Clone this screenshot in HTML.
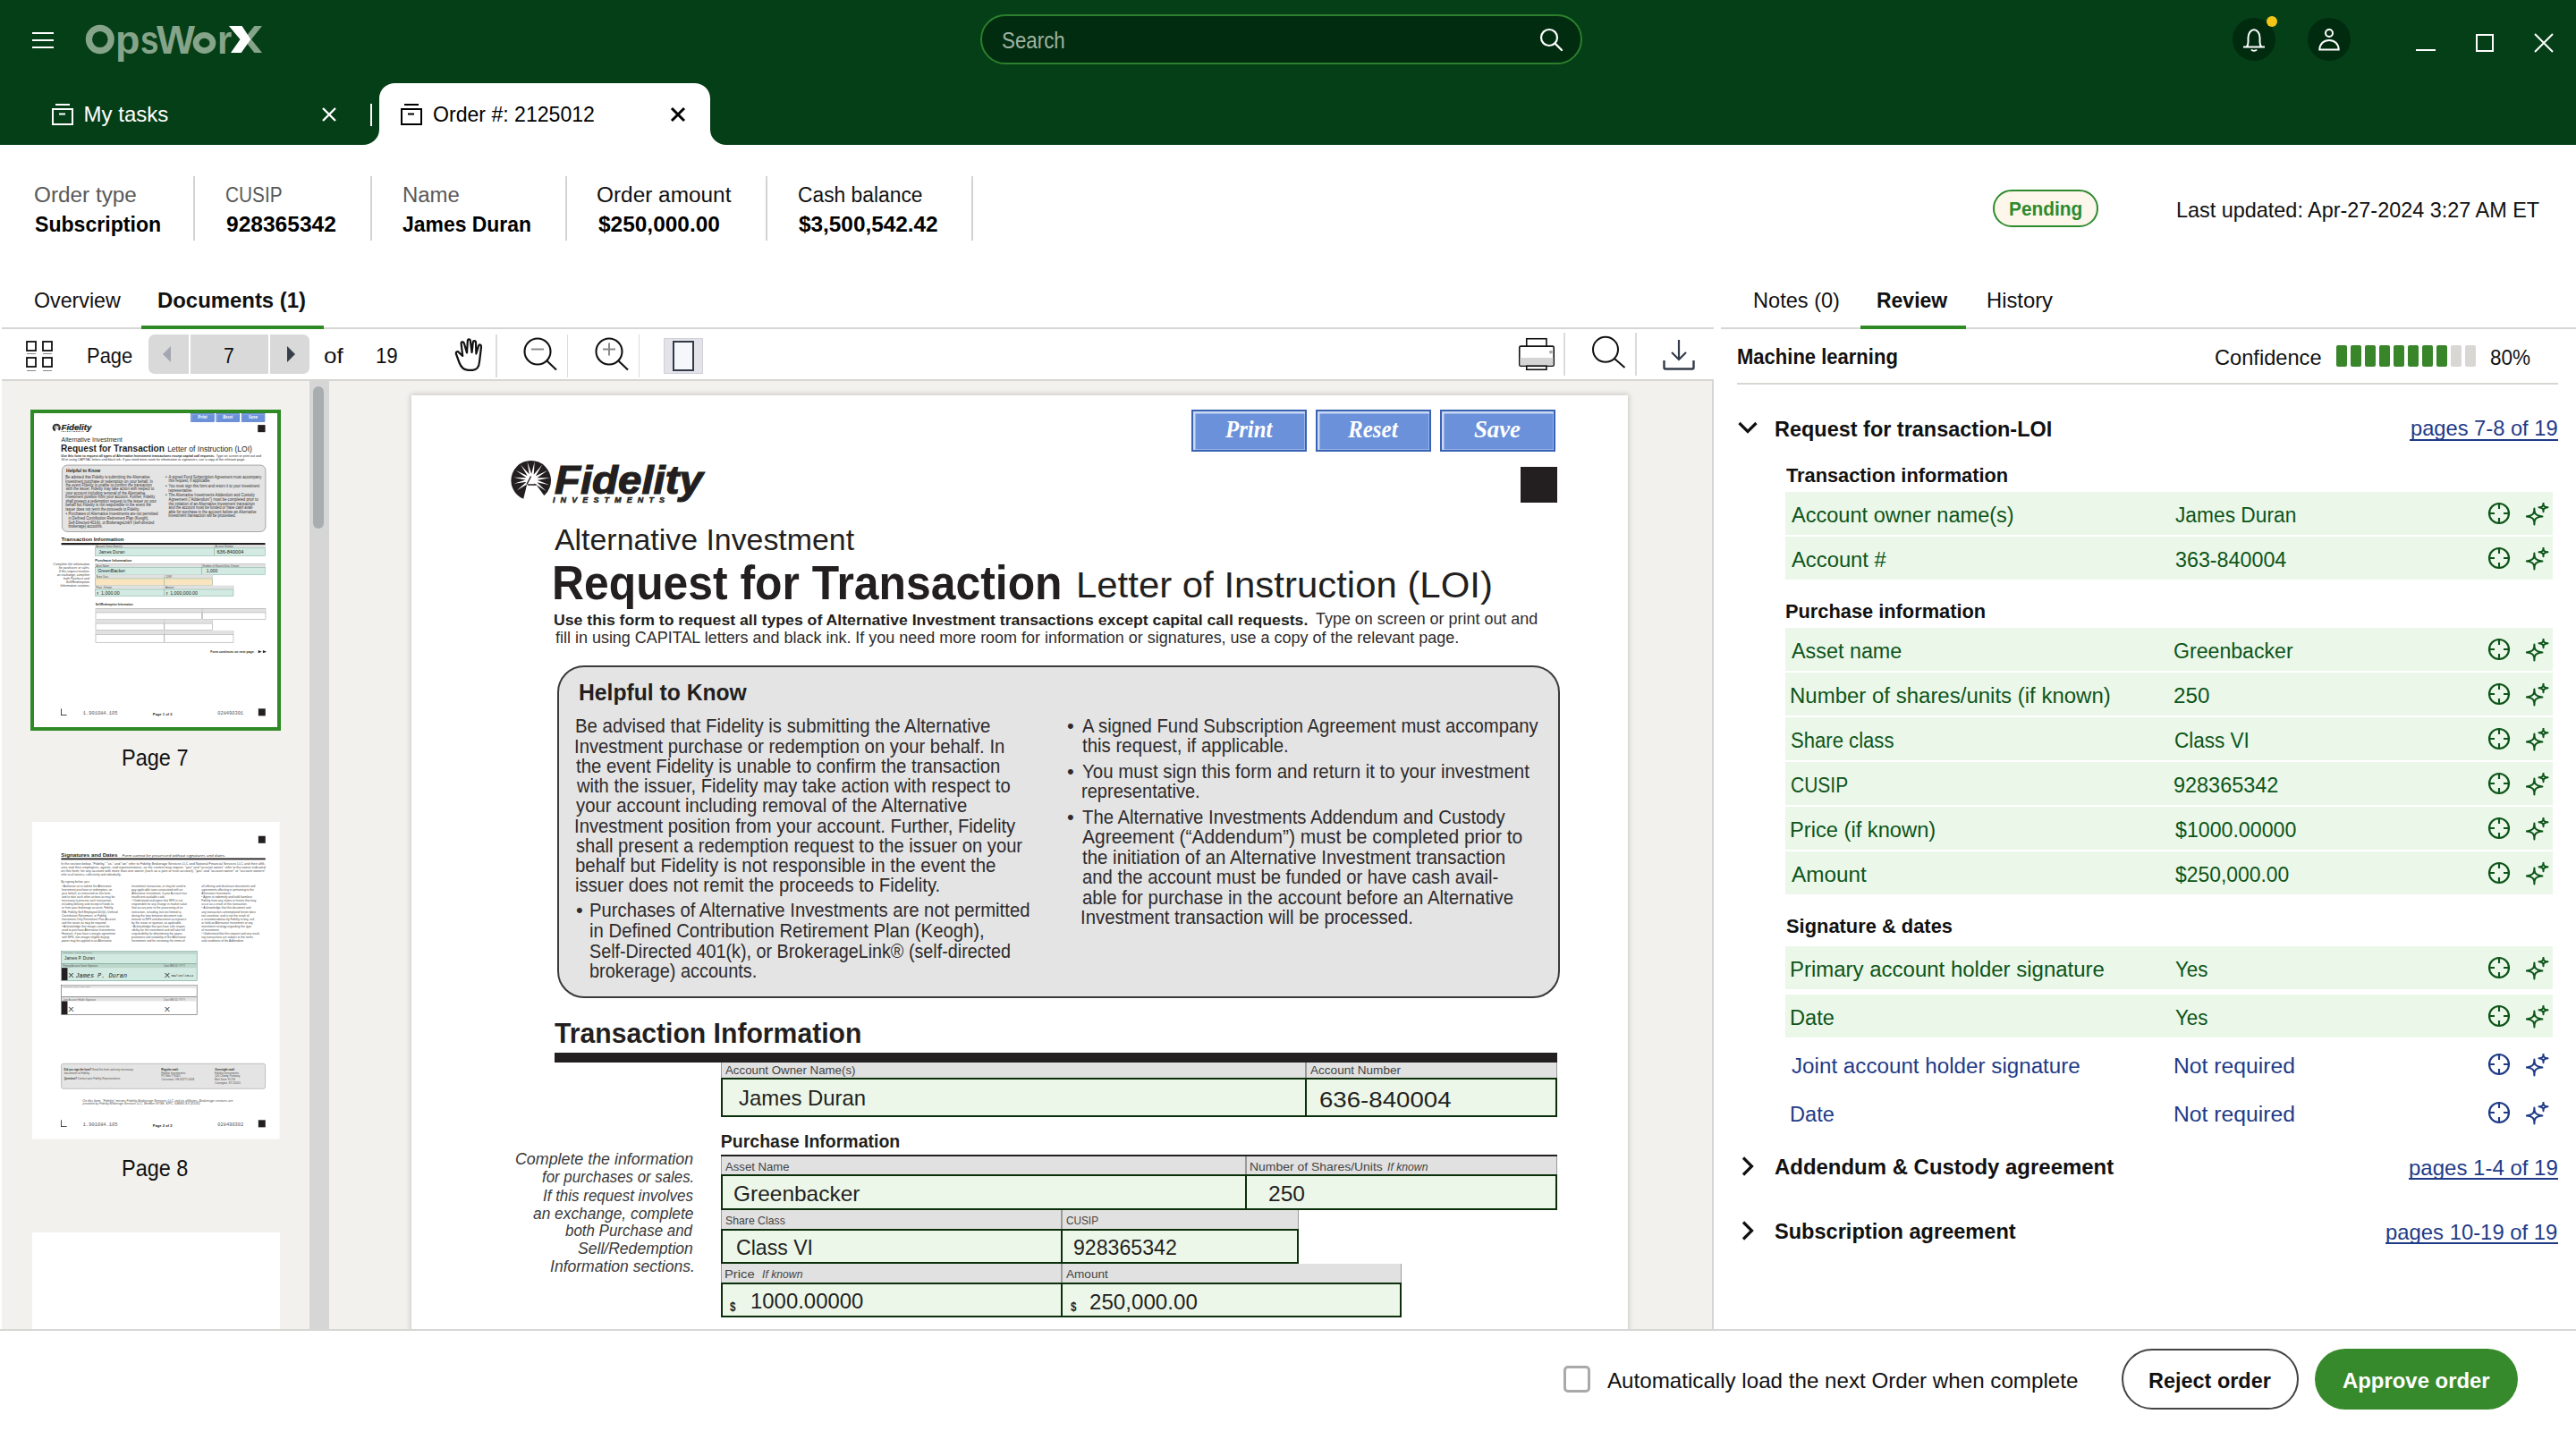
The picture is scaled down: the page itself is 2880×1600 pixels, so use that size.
<!DOCTYPE html><html><head><meta charset="utf-8"><style>*{margin:0;padding:0}
html,body{width:2880px;height:1600px;overflow:hidden;background:#fff}
body{position:relative;font-family:"Liberation Sans",sans-serif}
.t{position:absolute;white-space:nowrap;line-height:1;transform-origin:0 0}
.b{position:absolute;display:block}
</style></head><body><div class="b" style="left:0px;top:0px;width:2880px;height:162px;background:#053f17"></div><div class="b" style="left:36px;top:36px;width:24px;height:2px;background:#fff"></div><div class="b" style="left:36px;top:44px;width:24px;height:2px;background:#fff"></div><div class="b" style="left:36px;top:52px;width:24px;height:2px;background:#fff"></div><svg class="b" style="left:90px;top:22px;overflow:visible" width="60" height="50" viewBox="0 0 60 50" fill="none"><ellipse cx="21.8" cy="22" rx="12.4" ry="12.6" stroke="#86a48a" stroke-width="7.2"/><ellipse cx="138.5" cy="26" rx="9.4" ry="8.6" stroke="#86a48a" stroke-width="6.8"/></svg><div class="t" style="left:129.00px;top:21.50px;font-size:45px;color:#86a48a;font-weight:bold;">p</div><div class="t" style="left:156.78px;top:21.50px;font-size:45px;color:#86a48a;font-weight:bold;transform:scaleX(0.8174);">s</div><div class="t" style="left:174.80px;top:21.50px;font-size:45px;color:#86a48a;font-weight:bold;transform:scaleX(1.0140);">W</div><div class="t" style="left:242.95px;top:21.50px;font-size:45px;color:#86a48a;font-weight:bold;transform:scaleX(0.9267);">r</div><svg class="b" style="left:250px;top:25px;" width="50" height="40" viewBox="0 0 50 40" fill="none"><path d="M34.4 4H43L31 19L43 34H34.4L22.5 19Z" fill="#86a48a"/><path d="M5.9 4H20.5L30.3 19L19.7 34H8L18.5 19Z" fill="#fff"/></svg><div class="b" style="left:1096px;top:16px;width:673px;height:55px;background:#012c0f;border:2px solid #2c7f2c;border-radius:28px;height:56px;box-sizing:border-box"></div><div class="t" style="left:1119.61px;top:32.53px;font-size:25px;color:#9fb3a2;transform:scaleX(0.8925);">Search</div><svg class="b" style="left:1720px;top:30px;" width="30" height="30" viewBox="0 0 30 30" fill="none"><circle cx="12" cy="12" r="9" stroke="#fff" stroke-width="2.2"/><path d="M18.5 18.5L26 26" stroke="#fff" stroke-width="2.4" stroke-linecap="round"/></svg><div class="b" style="left:2496px;top:20px;width:48px;height:48px;background:#002b0f;border-radius:50%"></div><div class="b" style="left:2534px;top:18px;width:12px;height:12px;background:#f5c518;border-radius:50%"></div><svg class="b" style="left:2506px;top:30px;" width="28" height="30" viewBox="0 0 28 30" fill="none"><path d="M2 22.5H26M5.5 22.5C7 21 7.5 19 7.5 17V12C7.5 7 10.5 3.3 14 3.3C17.5 3.3 20.5 7 20.5 12V17C20.5 19 21 21 22.5 22.5" stroke="#fff" stroke-width="2"/><path d="M11 25.5C12 27.2 16 27.2 17 25.5" stroke="#fff" stroke-width="1.8"/></svg><div class="b" style="left:2580px;top:20px;width:48px;height:48px;background:#002b0f;border-radius:50%"></div><svg class="b" style="left:2590px;top:30px;" width="28" height="28" viewBox="0 0 28 28" fill="none"><circle cx="14" cy="7" r="4" stroke="#fff" stroke-width="2"/><path d="M3.3 25.5C3.5 19 8 15 14 15C20 15 24.5 19 24.7 25.5Z" stroke="#fff" stroke-width="2"/></svg><div class="b" style="left:2701px;top:55px;width:22px;height:2px;background:#fff"></div><div class="b" style="left:2768px;top:38px;width:20px;height:20px;border:2px solid #fff;box-sizing:border-box"></div><svg class="b" style="left:2832px;top:36px;" width="24" height="24" viewBox="0 0 24 24" fill="none"><path d="M2 2L22 22M22 2L2 22" stroke="#fff" stroke-width="2"/></svg><svg class="b" style="left:58px;top:116px;" width="24" height="24" viewBox="0 0 24 24" fill="none"><path d="M4 1H20" stroke="#fff" stroke-width="2"/><rect x="1" y="6" width="22" height="17" stroke="#fff" stroke-width="2"/><path d="M8 11.5H15" stroke="#fff" stroke-width="2"/></svg><div class="t" style="left:93.60px;top:115.68px;font-size:24px;color:#fff;">My tasks</div><svg class="b" style="left:358px;top:118px;" width="20" height="20" viewBox="0 0 20 20" fill="none"><path d="M3 3L17 17M17 3L3 17" stroke="#fff" stroke-width="2.4"/></svg><div class="b" style="left:414px;top:116px;width:2px;height:25px;background:#fff"></div><svg class="b" style="left:406px;top:93px" width="406" height="69" viewBox="0 0 406 69"><path d="M0 69C9 69 18 62 18 52V17C18 7 26 0 36 0H370C380 0 388 7 388 17V52C388 62 397 69 406 69Z" fill="#fff"/></svg><svg class="b" style="left:448px;top:116px;" width="24" height="24" viewBox="0 0 24 24" fill="none"><path d="M4 1H20" stroke="#000" stroke-width="2"/><rect x="1" y="6" width="22" height="17" stroke="#000" stroke-width="2"/><path d="M8 11.5H15" stroke="#000" stroke-width="2"/></svg><div class="t" style="left:484.04px;top:115.68px;font-size:24px;color:#000;transform:scaleX(0.9615);">Order #: 2125012</div><svg class="b" style="left:748px;top:118px;" width="20" height="20" viewBox="0 0 20 20" fill="none"><path d="M3 3L17 17M17 3L3 17" stroke="#000" stroke-width="3"/></svg><div class="t" style="left:37.54px;top:207.13px;font-size:23px;color:#595959;transform:scaleX(1.0574);">Order type</div><div class="t" style="left:251.60px;top:207.13px;font-size:23px;color:#595959;transform:scaleX(0.9050);">CUSIP</div><div class="t" style="left:449.96px;top:207.13px;font-size:23px;color:#595959;transform:scaleX(1.0410);">Name</div><div class="t" style="left:666.94px;top:207.13px;font-size:23px;color:#111;transform:scaleX(1.0600);">Order amount</div><div class="t" style="left:891.51px;top:207.13px;font-size:23px;color:#111;transform:scaleX(0.9917);">Cash balance</div><div class="t" style="left:38.60px;top:238.68px;font-size:24px;color:#000;font-weight:bold;transform:scaleX(0.9623);">Subscription</div><div class="t" style="left:252.50px;top:238.68px;font-size:24px;color:#000;font-weight:bold;transform:scaleX(1.0227);">928365342</div><div class="t" style="left:450.30px;top:238.68px;font-size:24px;color:#000;font-weight:bold;transform:scaleX(0.9555);">James Duran</div><div class="t" style="left:668.90px;top:238.68px;font-size:24px;color:#000;font-weight:bold;transform:scaleX(1.0179);">$250,000.00</div><div class="t" style="left:892.50px;top:238.68px;font-size:24px;color:#000;font-weight:bold;transform:scaleX(1.0142);">$3,500,542.42</div><div class="b" style="left:215.5px;top:197px;width:2px;height:72px;background:#d3d3d3"></div><div class="b" style="left:413.8px;top:197px;width:2px;height:72px;background:#d3d3d3"></div><div class="b" style="left:631.6px;top:197px;width:2px;height:72px;background:#d3d3d3"></div><div class="b" style="left:856px;top:197px;width:2px;height:72px;background:#d3d3d3"></div><div class="b" style="left:1085.5px;top:197px;width:2px;height:72px;background:#d3d3d3"></div><div class="b" style="left:2228px;top:212px;width:118px;height:42px;background:#fdf6ea;border:2px solid #2e8a2e;border-radius:21px;box-sizing:border-box"></div><div class="t" style="left:2246.05px;top:222.87px;font-size:22px;color:#2e8a2e;font-weight:bold;transform:scaleX(0.9486);">Pending</div><div class="t" style="left:2432.62px;top:222.98px;font-size:24px;color:#111;transform:scaleX(0.9755);">Last updated: Apr-27-2024 3:27 AM ET</div><div class="t" style="left:37.53px;top:323.98px;font-size:24px;color:#111;transform:scaleX(0.9680);">Overview</div><div class="t" style="left:176.00px;top:323.98px;font-size:24px;color:#111;font-weight:bold;transform:scaleX(0.9958);">Documents (1)</div><div class="b" style="left:2px;top:366px;width:1914px;height:2px;background:#d6d6d2"></div><div class="b" style="left:158px;top:364px;width:204px;height:4px;background:#2f8a26"></div><div class="b" style="left:1924px;top:366px;width:956px;height:2px;background:#d6d6d2"></div><div class="t" style="left:1960.02px;top:323.98px;font-size:24px;color:#111;transform:scaleX(0.9824);">Notes (0)</div><div class="t" style="left:2098.04px;top:323.98px;font-size:24px;color:#111;font-weight:bold;transform:scaleX(0.9568);">Review</div><div class="t" style="left:2220.51px;top:323.98px;font-size:24px;color:#111;transform:scaleX(0.9909);">History</div><div class="b" style="left:2080px;top:364px;width:118px;height:4px;background:#2f8a26"></div><svg class="b" style="left:27px;top:379px;" width="34" height="38" viewBox="0 0 34 38" fill="none"><rect x="3" y="3" width="10" height="10" stroke="#111" stroke-width="1.8"/><rect x="21" y="3" width="10" height="10" stroke="#111" stroke-width="1.8"/><rect x="3" y="21" width="10" height="10" stroke="#111" stroke-width="1.8"/><rect x="21" y="21" width="10" height="10" stroke="#111" stroke-width="1.8"/><path d="M3 16.5H13M21 16.5H31M3 35.5H13M21 35.5H31" stroke="#888" stroke-width="1"/></svg><div class="t" style="left:97.09px;top:386.08px;font-size:24px;color:#111;transform:scaleX(0.9140);">Page</div><div class="b" style="left:166px;top:374px;width:180px;height:44px;background:#d9d9d9;border-radius:7px"></div><div class="b" style="left:211px;top:374px;width:2px;height:44px;background:#fff"></div><div class="b" style="left:300px;top:374px;width:2px;height:44px;background:#fff"></div><svg class="b" style="left:180px;top:386px;" width="14" height="20" viewBox="0 0 14 20" fill="none"><path d="M11 1V19L2 10Z" fill="#a3a7b0"/></svg><div class="t" style="left:250.12px;top:386.08px;font-size:24px;color:#111;transform:scaleX(0.8833);">7</div><svg class="b" style="left:319px;top:386px;" width="14" height="20" viewBox="0 0 14 20" fill="none"><path d="M2 1V19L11 10Z" fill="#393e4b"/></svg><div class="t" style="left:361.91px;top:386.08px;font-size:24px;color:#111;transform:scaleX(1.0854);">of</div><div class="t" style="left:420.07px;top:386.08px;font-size:24px;color:#111;transform:scaleX(0.9271);">19</div><svg class="b" style="left:500px;top:372px;" width="50" height="50" viewBox="0 0 50 50" fill="none"><path d="M17.2 26L13.2 22.2C12 20.6 9.4 20.8 9.9 23.6L13.5 33.5C15 37.5 18 41.5 23.5 41.8H28.5C33 41.5 35.6 38 36 32.5L38 16C38.3 13.3 35.8 12.6 35 14.8L32.4 23.5L32 11C31.9 8.4 28.9 8.4 28.8 11L27.6 22L25.9 9.3C25.6 6.8 22.6 6.8 22.8 9.5L22 22.5L18.9 12C18.2 9.6 15.3 10 15.7 12.6Z" stroke="#111" stroke-width="2.2" stroke-linejoin="round"/></svg><div class="b" style="left:554.05px;top:374px;width:1.5px;height:48px;background:#dcdcdc"></div><div class="b" style="left:633.85px;top:374px;width:1.5px;height:48px;background:#dcdcdc"></div><div class="b" style="left:713.85px;top:374px;width:1.5px;height:48px;background:#dcdcdc"></div><svg class="b" style="left:583px;top:375px;" width="44" height="44" viewBox="0 0 44 44" fill="none"><circle cx="18" cy="18" r="14.5" stroke="#111" stroke-width="2.1"/><path d="M28.5 28.5L39 38.5" stroke="#111" stroke-width="2.1"/><path d="M11 15.5H25" stroke="#8a8a8a" stroke-width="2"/></svg><svg class="b" style="left:663px;top:375px;" width="44" height="44" viewBox="0 0 44 44" fill="none"><circle cx="18" cy="18" r="14.5" stroke="#111" stroke-width="2.1"/><path d="M28.5 28.5L39 38.5" stroke="#111" stroke-width="2.1"/><path d="M11 15.5H25M18 8.5V22.5" stroke="#8a8a8a" stroke-width="2"/></svg><div class="b" style="left:742px;top:378px;width:44px;height:40px;background:#e3e3e9;border:1px solid #cfd0d8;box-sizing:border-box"></div><div class="b" style="left:752px;top:380.5px;width:24px;height:34.5px;background:#f5f7fb;border:2.6px solid #333a48;box-sizing:border-box"></div><svg class="b" style="left:1696px;top:376px;" width="44" height="40" viewBox="0 0 44 40" fill="none"><rect x="10.75" y="2.75" width="22.2" height="12" fill="#fff" stroke="#111" stroke-width="1.6"/><rect x="2.75" y="11.15" width="38.5" height="22.1" rx="1.5" fill="#fff" stroke="#111" stroke-width="1.6"/><rect x="3.6" y="24" width="36.8" height="8.4" fill="#d5d5d5"/><rect x="10.75" y="33.25" width="22.2" height="4" fill="#fff" stroke="#111" stroke-width="1.6"/><circle cx="37.9" cy="17.6" r="1.9" fill="#aaa"/></svg><div class="b" style="left:1748.2px;top:372px;width:1.6px;height:48px;background:#dcdcdc"></div><svg class="b" style="left:1776px;top:374px;" width="44" height="44" viewBox="0 0 44 44" fill="none"><circle cx="19" cy="16.8" r="14" stroke="#111" stroke-width="2"/><path d="M29 27L40.5 37" stroke="#111" stroke-width="2"/></svg><div class="b" style="left:1828px;top:372px;width:1.6px;height:48px;background:#dcdcdc"></div><svg class="b" style="left:1856px;top:378px;" width="42" height="38" viewBox="0 0 42 38" fill="none"><path d="M21 2V24M13 16L21 24L29 16" stroke="#333a48" stroke-width="2.2"/><path d="M4.5 25V33C4.5 34 5 34.5 6 34.5H36C37 34.5 37.5 34 37.5 33V25" stroke="#333a48" stroke-width="2.4"/></svg><div class="b" style="left:2px;top:424px;width:1914px;height:2px;background:#d6d6d2"></div><div class="b" style="left:2px;top:426px;width:1912px;height:1060px;background:#f2f1ed"></div><div class="b" style="left:1914px;top:426px;width:2px;height:1060px;background:#d6d6d4"></div><div class="b" style="left:0px;top:1486px;width:2880px;height:2px;background:#d6d6d4"></div><div class="b" style="left:346px;top:426px;width:22px;height:1060px;background:#d6d6d6"></div><div class="b" style="left:350px;top:432px;width:12px;height:159px;background:#a8adb0;border-radius:6px"></div><div class="b" style="left:0;top:426px;width:1914px;height:1060px;overflow:hidden"><div class="b" style="left:460px;top:16px;width:1360px;height:1760px;background:#fff;box-shadow:0 0 6px 1px rgba(0,0,0,0.18)"><div class="b" style="left:872px;top:16px;width:128.5px;height:46.5px;background:#6a91d9;border:2px solid #3a62b4;box-shadow:inset 1px 1px 0 1.5px #c9d8f5;box-sizing:border-box"></div><div class="t" style="left:909.87px;top:25.14px;font-size:27px;color:#fff;font-family:'Liberation Serif';font-weight:bold;font-style:italic;transform:scaleX(0.9174);">Print</div><div class="b" style="left:1011px;top:16px;width:128.5px;height:46.5px;background:#6a91d9;border:2px solid #3a62b4;box-shadow:inset 1px 1px 0 1.5px #c9d8f5;box-sizing:border-box"></div><div class="t" style="left:1047.18px;top:25.14px;font-size:27px;color:#fff;font-family:'Liberation Serif';font-weight:bold;font-style:italic;transform:scaleX(0.9282);">Reset</div><div class="b" style="left:1150px;top:16px;width:128.5px;height:46.5px;background:#6a91d9;border:2px solid #3a62b4;box-shadow:inset 1px 1px 0 1.5px #c9d8f5;box-sizing:border-box"></div><div class="t" style="left:1188.25px;top:25.14px;font-size:27px;color:#fff;font-family:'Liberation Serif';font-weight:bold;font-style:italic;transform:scaleX(0.9905);">Save</div><div class="b" style="left:1240px;top:80px;width:41px;height:40px;background:#231f20"></div><svg class="b" style="left:108px;top:68px;" width="54" height="52" viewBox="0 0 54 52" fill="none"><circle cx="25.7" cy="27.2" r="22.3" fill="#231f20"/><path d="M21.8 29L16.2 52H46L31.6 32Z" fill="#fff"/><path d="M26.99 21.96L21.54 6.31L24.08 22.68ZM28.61 22.48L29.71 5.95L25.64 22.01ZM25.29 22.10L14.16 9.83L22.89 23.91ZM30.02 23.78L38.26 9.41L27.57 22.06ZM23.79 22.90L8.75 15.95L22.29 25.50ZM30.71 25.50L44.25 15.95L29.21 22.90ZM22.71 24.22L6.15 23.70L22.35 27.20ZM30.63 27.31L46.91 24.24L30.34 24.32ZM22.27 25.64L6.53 30.81L22.94 28.56ZM29.89 28.80L46.10 32.19L30.76 25.94ZM22.38 27.34L9.92 38.25L24.15 29.76ZM28.66 29.88L42.43 39.10L30.55 27.55Z" fill="#fff"/><circle cx="26.5" cy="26.2" r="5.2" fill="#fff"/><path d="M25.6 22.5L21 31.5M22 32H31.6" stroke="#231f20" stroke-width="1.4"/></svg><div class="t" style="left:160.40px;top:73.05px;font-size:44px;color:#231f20;font-weight:bold;font-style:italic;transform:scaleX(1.0770);font-weight:900;-webkit-text-stroke:1.2px #231f20;">Fidelity</div><div class="t" style="left:158.00px;top:112.68px;font-size:9px;color:#231f20;font-weight:bold;font-style:italic;letter-spacing:6.1px;-webkit-text-stroke:0.5px #231f20;">INVESTMENTS</div><div class="t" style="left:160.00px;top:145.78px;font-size:32.5px;color:#231f20;transform:scaleX(1.0420);">Alternative Investment</div><div class="t" style="left:157.23px;top:181.58px;font-size:54px;color:#231f20;font-weight:bold;transform:scaleX(0.9230);">Request for Transaction</div><div class="t" style="left:742.57px;top:191.06px;font-size:41.5px;color:#231f20;transform:scaleX(1.0099);">Letter of Instruction (LOI)</div><div class="t" style="left:159.46px;top:242.71px;font-size:17px;color:#231f20;font-weight:bold;transform:scaleX(1.0388);">Use this form to request all types of Alternative Investment transactions except capital call requests.</div><div class="t" style="left:1011.00px;top:242.28px;font-size:17.5px;color:#2e2b2c;transform:scaleX(1.0248);">Type on screen or print out and</div><div class="t" style="left:160.50px;top:262.58px;font-size:17.5px;color:#2e2b2c;transform:scaleX(1.0262);">fill in using CAPITAL letters and black ink. If you need more room for information or signatures, use a copy of the relevant page.</div><div class="b" style="left:162.5px;top:301.5px;width:1121.1px;height:372.5px;background:#e4e4e4;border:2px solid #3a3a3a;border-radius:30px;box-sizing:border-box"></div><div class="t" style="left:187.03px;top:320.41px;font-size:25.5px;color:#231f20;font-weight:bold;transform:scaleX(0.9678);">Helpful to Know</div><div class="t" style="left:182.77px;top:359.37px;font-size:22px;color:#2e2b2c;transform:scaleX(0.9261);">Be advised that Fidelity is submitting the Alternative</div><div class="t" style="left:181.86px;top:381.62px;font-size:22px;color:#2e2b2c;transform:scaleX(0.9217);">Investment purchase or redemption on your behalf. In</div><div class="t" style="left:183.70px;top:403.87px;font-size:22px;color:#2e2b2c;transform:scaleX(0.9237);">the event Fidelity is unable to confirm the transaction</div><div class="t" style="left:184.62px;top:426.12px;font-size:22px;color:#2e2b2c;transform:scaleX(0.9153);">with the issuer, Fidelity may take action with respect to</div><div class="t" style="left:183.70px;top:448.37px;font-size:22px;color:#2e2b2c;transform:scaleX(0.9238);">your account including removal of the Alternative</div><div class="t" style="left:181.86px;top:470.62px;font-size:22px;color:#2e2b2c;transform:scaleX(0.9208);">Investment position from your account. Further, Fidelity</div><div class="t" style="left:183.70px;top:492.87px;font-size:22px;color:#2e2b2c;transform:scaleX(0.9171);">shall present a redemption request to the issuer on your</div><div class="t" style="left:182.77px;top:515.12px;font-size:22px;color:#2e2b2c;transform:scaleX(0.9292);">behalf but Fidelity is not responsible in the event the</div><div class="t" style="left:182.78px;top:537.37px;font-size:22px;color:#2e2b2c;transform:scaleX(0.9231);">issuer does not remit the proceeds to Fidelity.</div><div class="t" style="left:184.00px;top:565.37px;font-size:22px;color:#2e2b2c;">•</div><div class="t" style="left:199.08px;top:565.37px;font-size:22px;color:#2e2b2c;transform:scaleX(0.9215);">Purchases of Alternative Investments are not permitted</div><div class="t" style="left:199.08px;top:587.97px;font-size:22px;color:#2e2b2c;transform:scaleX(0.9239);">in Defined Contribution Retirement Plan (Keogh),</div><div class="t" style="left:199.10px;top:610.57px;font-size:22px;color:#2e2b2c;transform:scaleX(0.8974);">Self-Directed 401(k), or BrokerageLink® (self-directed</div><div class="t" style="left:199.09px;top:633.17px;font-size:22px;color:#2e2b2c;transform:scaleX(0.9064);">brokerage) accounts.</div><div class="t" style="left:733.00px;top:359.37px;font-size:22px;color:#2e2b2c;">•</div><div class="t" style="left:750.00px;top:359.37px;font-size:22px;color:#2e2b2c;transform:scaleX(0.9222);">A signed Fund Subscription Agreement must accompany</div><div class="t" style="left:750.00px;top:381.07px;font-size:22px;color:#2e2b2c;transform:scaleX(0.9294);">this request, if applicable.</div><div class="t" style="left:733.00px;top:409.87px;font-size:22px;color:#2e2b2c;">•</div><div class="t" style="left:750.00px;top:409.87px;font-size:22px;color:#2e2b2c;transform:scaleX(0.9305);">You must sign this form and return it to your investment</div><div class="t" style="left:749.09px;top:432.37px;font-size:22px;color:#2e2b2c;transform:scaleX(0.9114);">representative.</div><div class="t" style="left:733.00px;top:460.77px;font-size:22px;color:#2e2b2c;">•</div><div class="t" style="left:750.00px;top:460.77px;font-size:22px;color:#2e2b2c;transform:scaleX(0.9226);">The Alternative Investments Addendum and Custody</div><div class="t" style="left:750.00px;top:483.17px;font-size:22px;color:#2e2b2c;transform:scaleX(0.9539);">Agreement (“Addendum”) must be completed prior to</div><div class="t" style="left:750.00px;top:505.67px;font-size:22px;color:#2e2b2c;transform:scaleX(0.9298);">the initiation of an Alternative Investment transaction</div><div class="t" style="left:750.00px;top:528.17px;font-size:22px;color:#2e2b2c;transform:scaleX(0.9212);">and the account must be funded or have cash avail-</div><div class="t" style="left:750.00px;top:550.67px;font-size:22px;color:#2e2b2c;transform:scaleX(0.9253);">able for purchase in the account before an Alternative</div><div class="t" style="left:748.15px;top:573.17px;font-size:22px;color:#2e2b2c;transform:scaleX(0.9244);">Investment transaction will be processed.</div><div class="t" style="left:160.00px;top:698.35px;font-size:31px;color:#231f20;font-weight:bold;transform:scaleX(0.9726);">Transaction Information</div><div class="b" style="left:160px;top:735px;width:1121px;height:10.5px;background:#231f20"></div><div class="t" style="left:115.84px;top:845.24px;font-size:18.5px;color:#3a3a3a;font-style:italic;transform:scaleX(0.9635);">Complete the information</div><div class="t" style="left:146.40px;top:865.34px;font-size:18.5px;color:#3a3a3a;font-style:italic;transform:scaleX(0.9097);">for purchases or sales.</div><div class="t" style="left:147.00px;top:885.54px;font-size:18.5px;color:#3a3a3a;font-style:italic;transform:scaleX(0.9175);">If this request involves</div><div class="t" style="left:135.60px;top:905.64px;font-size:18.5px;color:#3a3a3a;font-style:italic;transform:scaleX(0.9377);">an exchange, complete</div><div class="t" style="left:172.10px;top:925.04px;font-size:18.5px;color:#3a3a3a;font-style:italic;transform:scaleX(0.9140);">both Purchase and</div><div class="t" style="left:186.10px;top:945.14px;font-size:18.5px;color:#3a3a3a;font-style:italic;transform:scaleX(0.9494);">Sell/Redemption</div><div class="t" style="left:154.80px;top:965.24px;font-size:18.5px;color:#3a3a3a;font-style:italic;transform:scaleX(0.9487);">Information sections.</div><div class="b" style="left:346px;top:745.5px;width:653.5px;height:18.5px;background:#e1e1e1;border-left:1.5px solid #9a9a9a;border-right:1.5px solid #9a9a9a;box-sizing:border-box"></div><div class="t" style="left:351.00px;top:748.07px;font-size:13.5px;color:#444;transform:scaleX(0.9844);">Account Owner Name(s)</div><div class="b" style="left:999.5px;top:745.5px;width:281.2px;height:18.5px;background:#e1e1e1;border-left:1.5px solid #9a9a9a;border-right:1.5px solid #9a9a9a;box-sizing:border-box"></div><div class="t" style="left:1004.50px;top:748.07px;font-size:13.5px;color:#444;transform:scaleX(1.0045);">Account Number</div><div class="b" style="left:346px;top:763px;width:655px;height:44.4px;background:#ecf7ea;border:2.5px solid #0a2f0a;box-sizing:border-box"></div><div class="b" style="left:998.5px;top:763px;width:282.2px;height:44.4px;background:#ecf7ea;border:2.5px solid #0a2f0a;box-sizing:border-box"></div><div class="t" style="left:345.80px;top:825.49px;font-size:19.5px;color:#231f20;font-weight:bold;">Purchase Information</div><div class="b" style="left:346px;top:848.8px;width:934.7px;height:2.2px;background:#231f20"></div><div class="b" style="left:346px;top:851px;width:587px;height:21px;background:#e1e1e1;border-left:1.5px solid #9a9a9a;border-right:1.5px solid #9a9a9a;box-sizing:border-box"></div><div class="t" style="left:351.00px;top:856.07px;font-size:13.5px;color:#444;transform:scaleX(0.9724);">Asset Name</div><div class="b" style="left:933px;top:851px;width:347.7px;height:21px;background:#e1e1e1;border-left:1.5px solid #9a9a9a;border-right:1.5px solid #9a9a9a;box-sizing:border-box"></div><div class="t" style="left:936.97px;top:856.07px;font-size:13.5px;color:#444;transform:scaleX(1.0327);">Number of Shares/Units</div><div class="t" style="left:1091.00px;top:856.07px;font-size:13.5px;color:#444;font-style:italic;transform:scaleX(0.9042);">If known</div><div class="b" style="left:346px;top:871px;width:589px;height:40.3px;background:#ecf7ea;border:2.5px solid #0a2f0a;box-sizing:border-box"></div><div class="b" style="left:931.5px;top:871px;width:349.2px;height:40.3px;background:#ecf7ea;border:2.5px solid #0a2f0a;box-sizing:border-box"></div><div class="b" style="left:346px;top:911.3px;width:381px;height:21.1px;background:#e1e1e1;border-left:1.5px solid #9a9a9a;border-right:1.5px solid #9a9a9a;box-sizing:border-box"></div><div class="t" style="left:351.00px;top:916.47px;font-size:13.5px;color:#444;transform:scaleX(0.9081);">Share Class</div><div class="b" style="left:727px;top:911.3px;width:264.5px;height:21.1px;background:#e1e1e1;border-left:1.5px solid #9a9a9a;border-right:1.5px solid #9a9a9a;box-sizing:border-box"></div><div class="t" style="left:732.00px;top:916.47px;font-size:13.5px;color:#444;transform:scaleX(0.8726);">CUSIP</div><div class="b" style="left:346px;top:931.5px;width:383px;height:39.5px;background:#ecf7ea;border:2.5px solid #0a2f0a;box-sizing:border-box"></div><div class="b" style="left:725.5px;top:931.5px;width:266px;height:39.5px;background:#ecf7ea;border:2.5px solid #0a2f0a;box-sizing:border-box"></div><div class="b" style="left:346px;top:971px;width:381px;height:21.4px;background:#e1e1e1;border-left:1.5px solid #9a9a9a;border-right:1.5px solid #9a9a9a;box-sizing:border-box"></div><div class="t" style="left:349.91px;top:976.47px;font-size:13.5px;color:#444;transform:scaleX(1.0940);">Price</div><div class="t" style="left:391.50px;top:976.47px;font-size:13.5px;color:#444;font-style:italic;transform:scaleX(0.9042);">If known</div><div class="b" style="left:727px;top:971px;width:380.2px;height:21.4px;background:#e1e1e1;border-left:1.5px solid #9a9a9a;border-right:1.5px solid #9a9a9a;box-sizing:border-box"></div><div class="t" style="left:732.00px;top:976.47px;font-size:13.5px;color:#444;transform:scaleX(1.0048);">Amount</div><div class="b" style="left:346px;top:991.5px;width:383px;height:39.7px;background:#ecf7ea;border:2.5px solid #0a2f0a;box-sizing:border-box"></div><div class="b" style="left:725.5px;top:991.5px;width:381.7px;height:39.7px;background:#ecf7ea;border:2.5px solid #0a2f0a;box-sizing:border-box"></div><div class="t" style="left:365.50px;top:773.68px;font-size:24px;color:#231f20;transform:scaleX(0.9959);">James Duran</div><div class="t" style="left:1014.55px;top:775.88px;font-size:24px;color:#231f20;transform:scaleX(1.1517);">636-840004</div><div class="t" style="left:359.98px;top:881.08px;font-size:24px;color:#231f20;transform:scaleX(1.0193);">Greenbacker</div><div class="t" style="left:957.98px;top:880.68px;font-size:24px;color:#231f20;transform:scaleX(1.0234);">250</div><div class="t" style="left:363.04px;top:940.98px;font-size:24px;color:#231f20;transform:scaleX(0.9621);">Class VI</div><div class="t" style="left:740.34px;top:941.08px;font-size:24px;color:#231f20;transform:scaleX(0.9640);">928365342</div><div class="t" style="left:379.40px;top:1001.48px;font-size:24px;color:#231f20;transform:scaleX(0.9964);">1000.00000</div><div class="t" style="left:757.99px;top:1001.68px;font-size:24px;color:#231f20;transform:scaleX(1.0062);">250,000.00</div><div class="t" style="left:356.00px;top:1011.30px;font-size:15px;color:#231f20;font-weight:bold;transform:scaleX(0.7778);">$</div><div class="t" style="left:737.00px;top:1011.30px;font-size:15px;color:#231f20;font-weight:bold;transform:scaleX(0.7778);">$</div></div></div><div class="b" style="left:0;top:426px;width:346px;height:1060px;overflow:hidden"><div class="b" style="left:35.5px;top:32.7px;width:1360px;height:1760px;background:#fff;transform:scale(0.2034,0.2014);transform-origin:0 0;overflow:hidden"><div class="b" style="left:872px;top:16px;width:128.5px;height:46.5px;background:#6a91d9;border:2px solid #3a62b4;box-shadow:inset 1px 1px 0 1.5px #c9d8f5;box-sizing:border-box"></div><div class="t" style="left:909.87px;top:25.14px;font-size:27px;color:#fff;font-family:'Liberation Serif';font-weight:bold;font-style:italic;transform:scaleX(0.9174);">Print</div><div class="b" style="left:1011px;top:16px;width:128.5px;height:46.5px;background:#6a91d9;border:2px solid #3a62b4;box-shadow:inset 1px 1px 0 1.5px #c9d8f5;box-sizing:border-box"></div><div class="t" style="left:1047.18px;top:25.14px;font-size:27px;color:#fff;font-family:'Liberation Serif';font-weight:bold;font-style:italic;transform:scaleX(0.9282);">Reset</div><div class="b" style="left:1150px;top:16px;width:128.5px;height:46.5px;background:#6a91d9;border:2px solid #3a62b4;box-shadow:inset 1px 1px 0 1.5px #c9d8f5;box-sizing:border-box"></div><div class="t" style="left:1188.25px;top:25.14px;font-size:27px;color:#fff;font-family:'Liberation Serif';font-weight:bold;font-style:italic;transform:scaleX(0.9905);">Save</div><div class="b" style="left:1240px;top:80px;width:41px;height:40px;background:#231f20"></div><svg class="b" style="left:108px;top:68px;" width="54" height="52" viewBox="0 0 54 52" fill="none"><circle cx="25.7" cy="27.2" r="22.3" fill="#231f20"/><path d="M21.8 29L16.2 52H46L31.6 32Z" fill="#fff"/><path d="M26.99 21.96L21.54 6.31L24.08 22.68ZM28.61 22.48L29.71 5.95L25.64 22.01ZM25.29 22.10L14.16 9.83L22.89 23.91ZM30.02 23.78L38.26 9.41L27.57 22.06ZM23.79 22.90L8.75 15.95L22.29 25.50ZM30.71 25.50L44.25 15.95L29.21 22.90ZM22.71 24.22L6.15 23.70L22.35 27.20ZM30.63 27.31L46.91 24.24L30.34 24.32ZM22.27 25.64L6.53 30.81L22.94 28.56ZM29.89 28.80L46.10 32.19L30.76 25.94ZM22.38 27.34L9.92 38.25L24.15 29.76ZM28.66 29.88L42.43 39.10L30.55 27.55Z" fill="#fff"/><circle cx="26.5" cy="26.2" r="5.2" fill="#fff"/><path d="M25.6 22.5L21 31.5M22 32H31.6" stroke="#231f20" stroke-width="1.4"/></svg><div class="t" style="left:160.40px;top:73.05px;font-size:44px;color:#231f20;font-weight:bold;font-style:italic;transform:scaleX(1.0770);font-weight:900;-webkit-text-stroke:1.2px #231f20;">Fidelity</div><div class="t" style="left:158.00px;top:112.68px;font-size:9px;color:#231f20;font-weight:bold;font-style:italic;letter-spacing:6.1px;-webkit-text-stroke:0.5px #231f20;">INVESTMENTS</div><div class="t" style="left:160.00px;top:145.78px;font-size:32.5px;color:#231f20;transform:scaleX(1.0420);">Alternative Investment</div><div class="t" style="left:157.23px;top:181.58px;font-size:54px;color:#231f20;font-weight:bold;transform:scaleX(0.9230);">Request for Transaction</div><div class="t" style="left:742.57px;top:191.06px;font-size:41.5px;color:#231f20;transform:scaleX(1.0099);">Letter of Instruction (LOI)</div><div class="t" style="left:159.46px;top:242.71px;font-size:17px;color:#231f20;font-weight:bold;transform:scaleX(1.0388);">Use this form to request all types of Alternative Investment transactions except capital call requests.</div><div class="t" style="left:1011.00px;top:242.28px;font-size:17.5px;color:#2e2b2c;transform:scaleX(1.0248);">Type on screen or print out and</div><div class="t" style="left:160.50px;top:262.58px;font-size:17.5px;color:#2e2b2c;transform:scaleX(1.0262);">fill in using CAPITAL letters and black ink. If you need more room for information or signatures, use a copy of the relevant page.</div><div class="b" style="left:162.5px;top:301.5px;width:1121.1px;height:372.5px;background:#e4e4e4;border:2px solid #3a3a3a;border-radius:30px;box-sizing:border-box"></div><div class="t" style="left:187.03px;top:320.41px;font-size:25.5px;color:#231f20;font-weight:bold;transform:scaleX(0.9678);">Helpful to Know</div><div class="t" style="left:182.77px;top:359.37px;font-size:22px;color:#2e2b2c;transform:scaleX(0.9261);">Be advised that Fidelity is submitting the Alternative</div><div class="t" style="left:181.86px;top:381.62px;font-size:22px;color:#2e2b2c;transform:scaleX(0.9217);">Investment purchase or redemption on your behalf. In</div><div class="t" style="left:183.70px;top:403.87px;font-size:22px;color:#2e2b2c;transform:scaleX(0.9237);">the event Fidelity is unable to confirm the transaction</div><div class="t" style="left:184.62px;top:426.12px;font-size:22px;color:#2e2b2c;transform:scaleX(0.9153);">with the issuer, Fidelity may take action with respect to</div><div class="t" style="left:183.70px;top:448.37px;font-size:22px;color:#2e2b2c;transform:scaleX(0.9238);">your account including removal of the Alternative</div><div class="t" style="left:181.86px;top:470.62px;font-size:22px;color:#2e2b2c;transform:scaleX(0.9208);">Investment position from your account. Further, Fidelity</div><div class="t" style="left:183.70px;top:492.87px;font-size:22px;color:#2e2b2c;transform:scaleX(0.9171);">shall present a redemption request to the issuer on your</div><div class="t" style="left:182.77px;top:515.12px;font-size:22px;color:#2e2b2c;transform:scaleX(0.9292);">behalf but Fidelity is not responsible in the event the</div><div class="t" style="left:182.78px;top:537.37px;font-size:22px;color:#2e2b2c;transform:scaleX(0.9231);">issuer does not remit the proceeds to Fidelity.</div><div class="t" style="left:184.00px;top:565.37px;font-size:22px;color:#2e2b2c;">•</div><div class="t" style="left:199.08px;top:565.37px;font-size:22px;color:#2e2b2c;transform:scaleX(0.9215);">Purchases of Alternative Investments are not permitted</div><div class="t" style="left:199.08px;top:587.97px;font-size:22px;color:#2e2b2c;transform:scaleX(0.9239);">in Defined Contribution Retirement Plan (Keogh),</div><div class="t" style="left:199.10px;top:610.57px;font-size:22px;color:#2e2b2c;transform:scaleX(0.8974);">Self-Directed 401(k), or BrokerageLink® (self-directed</div><div class="t" style="left:199.09px;top:633.17px;font-size:22px;color:#2e2b2c;transform:scaleX(0.9064);">brokerage) accounts.</div><div class="t" style="left:733.00px;top:359.37px;font-size:22px;color:#2e2b2c;">•</div><div class="t" style="left:750.00px;top:359.37px;font-size:22px;color:#2e2b2c;transform:scaleX(0.9222);">A signed Fund Subscription Agreement must accompany</div><div class="t" style="left:750.00px;top:381.07px;font-size:22px;color:#2e2b2c;transform:scaleX(0.9294);">this request, if applicable.</div><div class="t" style="left:733.00px;top:409.87px;font-size:22px;color:#2e2b2c;">•</div><div class="t" style="left:750.00px;top:409.87px;font-size:22px;color:#2e2b2c;transform:scaleX(0.9305);">You must sign this form and return it to your investment</div><div class="t" style="left:749.09px;top:432.37px;font-size:22px;color:#2e2b2c;transform:scaleX(0.9114);">representative.</div><div class="t" style="left:733.00px;top:460.77px;font-size:22px;color:#2e2b2c;">•</div><div class="t" style="left:750.00px;top:460.77px;font-size:22px;color:#2e2b2c;transform:scaleX(0.9226);">The Alternative Investments Addendum and Custody</div><div class="t" style="left:750.00px;top:483.17px;font-size:22px;color:#2e2b2c;transform:scaleX(0.9539);">Agreement (“Addendum”) must be completed prior to</div><div class="t" style="left:750.00px;top:505.67px;font-size:22px;color:#2e2b2c;transform:scaleX(0.9298);">the initiation of an Alternative Investment transaction</div><div class="t" style="left:750.00px;top:528.17px;font-size:22px;color:#2e2b2c;transform:scaleX(0.9212);">and the account must be funded or have cash avail-</div><div class="t" style="left:750.00px;top:550.67px;font-size:22px;color:#2e2b2c;transform:scaleX(0.9253);">able for purchase in the account before an Alternative</div><div class="t" style="left:748.15px;top:573.17px;font-size:22px;color:#2e2b2c;transform:scaleX(0.9244);">Investment transaction will be processed.</div><div class="t" style="left:160.00px;top:698.35px;font-size:31px;color:#231f20;font-weight:bold;transform:scaleX(0.9726);">Transaction Information</div><div class="b" style="left:160px;top:735px;width:1121px;height:10.5px;background:#231f20"></div><div class="t" style="left:115.84px;top:845.24px;font-size:18.5px;color:#3a3a3a;font-style:italic;transform:scaleX(0.9635);">Complete the information</div><div class="t" style="left:146.40px;top:865.34px;font-size:18.5px;color:#3a3a3a;font-style:italic;transform:scaleX(0.9097);">for purchases or sales.</div><div class="t" style="left:147.00px;top:885.54px;font-size:18.5px;color:#3a3a3a;font-style:italic;transform:scaleX(0.9175);">If this request involves</div><div class="t" style="left:135.60px;top:905.64px;font-size:18.5px;color:#3a3a3a;font-style:italic;transform:scaleX(0.9377);">an exchange, complete</div><div class="t" style="left:172.10px;top:925.04px;font-size:18.5px;color:#3a3a3a;font-style:italic;transform:scaleX(0.9140);">both Purchase and</div><div class="t" style="left:186.10px;top:945.14px;font-size:18.5px;color:#3a3a3a;font-style:italic;transform:scaleX(0.9494);">Sell/Redemption</div><div class="t" style="left:154.80px;top:965.24px;font-size:18.5px;color:#3a3a3a;font-style:italic;transform:scaleX(0.9487);">Information sections.</div><div class="b" style="left:346px;top:745.5px;width:653.5px;height:18.5px;background:#e1e1e1;border-left:1.5px solid #9a9a9a;border-right:1.5px solid #9a9a9a;box-sizing:border-box"></div><div class="t" style="left:351.00px;top:748.07px;font-size:13.5px;color:#444;transform:scaleX(0.9844);">Account Owner Name(s)</div><div class="b" style="left:999.5px;top:745.5px;width:281.2px;height:18.5px;background:#e1e1e1;border-left:1.5px solid #9a9a9a;border-right:1.5px solid #9a9a9a;box-sizing:border-box"></div><div class="t" style="left:1004.50px;top:748.07px;font-size:13.5px;color:#444;transform:scaleX(1.0045);">Account Number</div><div class="b" style="left:346px;top:763px;width:655px;height:44.4px;background:#d3eae2;border:2.5px solid #5f9c88;box-sizing:border-box"></div><div class="b" style="left:998.5px;top:763px;width:282.2px;height:44.4px;background:#d3eae2;border:2.5px solid #5f9c88;box-sizing:border-box"></div><div class="t" style="left:345.80px;top:825.49px;font-size:19.5px;color:#231f20;font-weight:bold;">Purchase Information</div><div class="b" style="left:346px;top:848.8px;width:934.7px;height:2.2px;background:#231f20"></div><div class="b" style="left:346px;top:851px;width:587px;height:21px;background:#e1e1e1;border-left:1.5px solid #9a9a9a;border-right:1.5px solid #9a9a9a;box-sizing:border-box"></div><div class="t" style="left:351.00px;top:856.07px;font-size:13.5px;color:#444;transform:scaleX(0.9724);">Asset Name</div><div class="b" style="left:933px;top:851px;width:347.7px;height:21px;background:#e1e1e1;border-left:1.5px solid #9a9a9a;border-right:1.5px solid #9a9a9a;box-sizing:border-box"></div><div class="t" style="left:936.97px;top:856.07px;font-size:13.5px;color:#444;transform:scaleX(1.0327);">Number of Shares/Units</div><div class="t" style="left:1091.00px;top:856.07px;font-size:13.5px;color:#444;font-style:italic;transform:scaleX(0.9042);">If known</div><div class="b" style="left:346px;top:871px;width:589px;height:40.3px;background:#d3eae2;border:2.5px solid #5f9c88;box-sizing:border-box"></div><div class="b" style="left:931.5px;top:871px;width:349.2px;height:40.3px;background:#d3eae2;border:2.5px solid #5f9c88;box-sizing:border-box"></div><div class="b" style="left:346px;top:911.3px;width:381px;height:21.1px;background:#e1e1e1;border-left:1.5px solid #9a9a9a;border-right:1.5px solid #9a9a9a;box-sizing:border-box"></div><div class="t" style="left:351.00px;top:916.47px;font-size:13.5px;color:#444;transform:scaleX(0.9081);">Share Class</div><div class="b" style="left:727px;top:911.3px;width:264.5px;height:21.1px;background:#e1e1e1;border-left:1.5px solid #9a9a9a;border-right:1.5px solid #9a9a9a;box-sizing:border-box"></div><div class="t" style="left:732.00px;top:916.47px;font-size:13.5px;color:#444;transform:scaleX(0.8726);">CUSIP</div><div class="b" style="left:346px;top:931.5px;width:383px;height:39.5px;background:#f9e4c0;border:2.5px solid #5f9c88;box-sizing:border-box"></div><div class="b" style="left:725.5px;top:931.5px;width:266px;height:39.5px;background:#f9e4c0;border:2.5px solid #5f9c88;box-sizing:border-box"></div><div class="b" style="left:346px;top:971px;width:381px;height:21.4px;background:#e1e1e1;border-left:1.5px solid #9a9a9a;border-right:1.5px solid #9a9a9a;box-sizing:border-box"></div><div class="t" style="left:349.91px;top:976.47px;font-size:13.5px;color:#444;transform:scaleX(1.0940);">Price</div><div class="t" style="left:391.50px;top:976.47px;font-size:13.5px;color:#444;font-style:italic;transform:scaleX(0.9042);">If known</div><div class="b" style="left:727px;top:971px;width:380.2px;height:21.4px;background:#e1e1e1;border-left:1.5px solid #9a9a9a;border-right:1.5px solid #9a9a9a;box-sizing:border-box"></div><div class="t" style="left:732.00px;top:976.47px;font-size:13.5px;color:#444;transform:scaleX(1.0048);">Amount</div><div class="b" style="left:346px;top:991.5px;width:383px;height:39.7px;background:#d3eae2;border:2.5px solid #5f9c88;box-sizing:border-box"></div><div class="b" style="left:725.5px;top:991.5px;width:381.7px;height:39.7px;background:#d3eae2;border:2.5px solid #5f9c88;box-sizing:border-box"></div><div class="t" style="left:365.50px;top:773.68px;font-size:24px;color:#231f20;transform:scaleX(0.9959);">James Duran</div><div class="t" style="left:1014.55px;top:775.88px;font-size:24px;color:#231f20;transform:scaleX(1.1517);">636-840004</div><div class="t" style="left:359.93px;top:881.08px;font-size:24px;color:#231f20;transform:scaleX(1.0683);">GreenBacker</div><div class="t" style="left:957.98px;top:880.68px;font-size:24px;color:#231f20;transform:scaleX(1.0220);">1,000</div><div class="t" style="left:379.31px;top:1001.48px;font-size:24px;color:#231f20;transform:scaleX(1.0861);">1,000.00</div><div class="t" style="left:757.92px;top:1001.68px;font-size:24px;color:#231f20;transform:scaleX(1.0808);">1,000,000.00</div><div class="t" style="left:356.00px;top:1011.30px;font-size:15px;color:#231f20;font-weight:bold;transform:scaleX(0.7778);">$</div><div class="t" style="left:737.00px;top:1011.30px;font-size:15px;color:#231f20;font-weight:bold;transform:scaleX(0.7778);">$</div><div class="t" style="left:347.60px;top:1065.49px;font-size:19.5px;color:#231f20;font-weight:bold;transform:scaleX(0.7750);">Sell/Redemption Information</div><div class="b" style="left:347.6px;top:1097.8px;width:936.4px;height:2px;background:#231f20"></div><div class="b" style="left:347.6px;top:1099.8px;width:586px;height:21px;background:#e1e1e1;border-left:1.5px solid #9a9a9a;border-right:1.5px solid #9a9a9a;box-sizing:border-box"></div><div class="b" style="left:347.6px;top:1120.8px;width:586px;height:39.2px;background:#fff;border:2px solid #777;box-sizing:border-box"></div><div class="b" style="left:933.6px;top:1099.8px;width:350.4px;height:21px;background:#e1e1e1;border-left:1.5px solid #9a9a9a;border-right:1.5px solid #9a9a9a;box-sizing:border-box"></div><div class="b" style="left:933.6px;top:1120.8px;width:350.4px;height:39.2px;background:#fff;border:2px solid #777;box-sizing:border-box"></div><div class="b" style="left:347.6px;top:1160px;width:378.4px;height:21px;background:#e1e1e1;border-left:1.5px solid #9a9a9a;border-right:1.5px solid #9a9a9a;box-sizing:border-box"></div><div class="b" style="left:347.6px;top:1181px;width:378.4px;height:40px;background:#fff;border:2px solid #777;box-sizing:border-box"></div><div class="b" style="left:726px;top:1160px;width:267px;height:21px;background:#e1e1e1;border-left:1.5px solid #9a9a9a;border-right:1.5px solid #9a9a9a;box-sizing:border-box"></div><div class="b" style="left:726px;top:1181px;width:267px;height:40px;background:#fff;border:2px solid #777;box-sizing:border-box"></div><div class="b" style="left:347.6px;top:1221px;width:378.4px;height:21px;background:#e1e1e1;border-left:1.5px solid #9a9a9a;border-right:1.5px solid #9a9a9a;box-sizing:border-box"></div><div class="b" style="left:347.6px;top:1242px;width:378.4px;height:45.6px;background:#fff;border:2px solid #777;box-sizing:border-box"></div><div class="b" style="left:726px;top:1221px;width:380.7px;height:21px;background:#e1e1e1;border-left:1.5px solid #9a9a9a;border-right:1.5px solid #9a9a9a;box-sizing:border-box"></div><div class="b" style="left:726px;top:1242px;width:380.7px;height:45.6px;background:#fff;border:2px solid #777;box-sizing:border-box"></div><div class="t" style="left:980.00px;top:1332.61px;font-size:17px;color:#231f20;font-weight:bold;">Form continues on next page.</div><svg class="b" style="left:1240px;top:1330px;" width="54" height="18" viewBox="0 0 54 18" fill="none"><path d="M2 1L22 9L2 17ZM28 1L48 9L28 17Z" fill="#231f20"/></svg><div class="b" style="left:158px;top:1655px;width:4px;height:38px;background:#231f20"></div><div class="b" style="left:158px;top:1689px;width:32px;height:4px;background:#231f20"></div><div class="t" style="left:278.80px;top:1674.37px;font-size:22px;color:#555;font-family:'Liberation Mono';transform:scaleX(1.2034);">1.901084.105</div><div class="t" style="left:662.88px;top:1677.76px;font-size:18px;color:#231f20;font-weight:bold;transform:scaleX(1.1167);">Page 1 of 2</div><div class="t" style="left:1018.81px;top:1674.37px;font-size:22px;color:#555;font-family:'Liberation Mono';transform:scaleX(1.1903);">028490301</div><div class="b" style="left:1243px;top:1655px;width:39px;height:40px;background:#231f20"></div></div><div class="b" style="left:34px;top:32px;width:280px;height:359px;border:4px solid #2f8a26;box-sizing:border-box"></div><div class="b" style="left:35.6px;top:493px;width:1360px;height:1760px;background:#fff;transform:scale(0.2034,0.2014);transform-origin:0 0;overflow:hidden"><div class="b" style="left:1243px;top:78px;width:39px;height:40px;background:#231f20"></div><div class="t" style="left:159.00px;top:165.75px;font-size:31px;color:#231f20;font-weight:bold;transform:scaleX(0.9787);">Signatures and Dates</div><div class="t" style="left:494.00px;top:175.07px;font-size:20px;color:#333;font-style:italic;transform:scaleX(1.1313);">Form cannot be processed without signatures and dates.</div><div class="b" style="left:159px;top:201px;width:1123px;height:9px;background:#231f20"></div><div class="t" style="left:157.84px;top:226.45px;font-size:16px;color:#4a4a4a;transform:scaleX(1.1556);">In the section below, “Fidelity,” “us,” and “we” refer to Fidelity Brokerage Services LLC and National Financial Services LLC and their affili-</div><div class="t" style="left:159.00px;top:246.25px;font-size:16px;color:#4a4a4a;transform:scaleX(1.1500);">ates and their employees, agents, and representatives, as the context may require; “you” and “account owner” refer to the owner indicated</div><div class="t" style="left:159.00px;top:266.05px;font-size:16px;color:#4a4a4a;transform:scaleX(1.1643);">on this form; for any account with more than one owner (such as a joint or trust account), “you” and “account owner” or “account owners”</div><div class="t" style="left:158.00px;top:285.85px;font-size:16px;color:#4a4a4a;">refer to all owners, collectively and individually.</div><div class="t" style="left:158.00px;top:324.45px;font-size:16px;color:#4a4a4a;">By signing below, you:</div><div class="t" style="left:162.00px;top:348.45px;font-size:16px;color:#4a4a4a;white-space:pre;">• Authorize us to submit the Alternative</div><div class="t" style="left:145.00px;top:368.85px;font-size:16px;color:#4a4a4a;white-space:pre;">  Investment purchase or redemption, on</div><div class="t" style="left:146.00px;top:389.25px;font-size:16px;color:#4a4a4a;white-space:pre;">  your behalf, as instructed on this form,</div><div class="t" style="left:146.00px;top:409.65px;font-size:16px;color:#4a4a4a;white-space:pre;">  and to take such other actions as may be</div><div class="t" style="left:145.00px;top:430.05px;font-size:16px;color:#4a4a4a;white-space:pre;">  necessary to process such transaction,</div><div class="t" style="left:145.00px;top:450.45px;font-size:16px;color:#4a4a4a;white-space:pre;">  including delivery and receipt of funds to</div><div class="t" style="left:146.00px;top:470.85px;font-size:16px;color:#4a4a4a;white-space:pre;">  or from your brokerage account, Fidelity</div><div class="t" style="left:145.00px;top:491.25px;font-size:16px;color:#4a4a4a;white-space:pre;">  IRA, Fidelity Self-Employed 401(k), Defined</div><div class="t" style="left:146.00px;top:511.65px;font-size:16px;color:#4a4a4a;white-space:pre;">  Contribution Retirement, or Fidelity</div><div class="t" style="left:145.00px;top:532.05px;font-size:16px;color:#4a4a4a;white-space:pre;">  Investment-Only Retirement Plan Account</div><div class="t" style="left:146.00px;top:552.45px;font-size:16px;color:#4a4a4a;white-space:pre;">  and the issuer as may be required.</div><div class="t" style="left:162.00px;top:572.85px;font-size:16px;color:#4a4a4a;white-space:pre;">• Acknowledge that margin cannot be</div><div class="t" style="left:145.00px;top:593.25px;font-size:16px;color:#4a4a4a;white-space:pre;">  used to purchase Alternative Investments.</div><div class="t" style="left:145.00px;top:613.65px;font-size:16px;color:#4a4a4a;white-space:pre;">  However, if you have a margin agreement</div><div class="t" style="left:147.00px;top:634.05px;font-size:16px;color:#4a4a4a;white-space:pre;">  with NFS, non-margin eligible buying</div><div class="t" style="left:145.00px;top:654.45px;font-size:16px;color:#4a4a4a;white-space:pre;">  power may be applied to an Alternative</div><div class="t" style="left:546.00px;top:348.45px;font-size:16px;color:#4a4a4a;white-space:pre;">Investment transaction, or may be used to</div><div class="t" style="left:546.00px;top:368.85px;font-size:16px;color:#4a4a4a;white-space:pre;">pay applicable taxes associated with an</div><div class="t" style="left:547.00px;top:389.25px;font-size:16px;color:#4a4a4a;white-space:pre;">Alternative Investment, if your Account has</div><div class="t" style="left:546.00px;top:409.65px;font-size:16px;color:#4a4a4a;white-space:pre;">insufficient available cash.</div><div class="t" style="left:547.00px;top:430.05px;font-size:16px;color:#4a4a4a;white-space:pre;">• Understand and agree that NFS is not</div><div class="t" style="left:530.00px;top:450.45px;font-size:16px;color:#4a4a4a;white-space:pre;">  responsible for any change in market value</div><div class="t" style="left:531.00px;top:470.85px;font-size:16px;color:#4a4a4a;white-space:pre;">  that occurs prior to the processing of an</div><div class="t" style="left:530.00px;top:491.25px;font-size:16px;color:#4a4a4a;white-space:pre;">  instruction, including, but not limited to,</div><div class="t" style="left:531.00px;top:511.65px;font-size:16px;color:#4a4a4a;white-space:pre;">  during the time between document sub-</div><div class="t" style="left:530.00px;top:532.05px;font-size:16px;color:#4a4a4a;white-space:pre;">  mission to NFS and document acceptance</div><div class="t" style="left:530.00px;top:552.45px;font-size:16px;color:#4a4a4a;white-space:pre;">  by the issuer or sponsor, as applicable.</div><div class="t" style="left:547.00px;top:572.85px;font-size:16px;color:#4a4a4a;white-space:pre;">• Acknowledge that you have sole respon-</div><div class="t" style="left:531.00px;top:593.25px;font-size:16px;color:#4a4a4a;white-space:pre;">  sibility for the investment and will take full</div><div class="t" style="left:530.00px;top:613.65px;font-size:16px;color:#4a4a4a;white-space:pre;">  responsibility for determining the appro-</div><div class="t" style="left:530.00px;top:634.05px;font-size:16px;color:#4a4a4a;white-space:pre;">  priateness and suitability of the Alternative</div><div class="t" style="left:530.00px;top:654.45px;font-size:16px;color:#4a4a4a;white-space:pre;">  Investment and for reviewing the terms of</div><div class="t" style="left:931.00px;top:348.45px;font-size:16px;color:#4a4a4a;white-space:pre;">all offering and disclosure documents and</div><div class="t" style="left:931.00px;top:368.85px;font-size:16px;color:#4a4a4a;white-space:pre;">agreements affecting or pertaining to the</div><div class="t" style="left:931.00px;top:389.25px;font-size:16px;color:#4a4a4a;white-space:pre;">Alternative Investment.</div><div class="t" style="left:931.00px;top:409.65px;font-size:16px;color:#4a4a4a;white-space:pre;">• Agree to indemnify and hold harmless</div><div class="t" style="left:914.00px;top:430.05px;font-size:16px;color:#4a4a4a;white-space:pre;">  Fidelity from any claims or losses that may</div><div class="t" style="left:915.00px;top:450.45px;font-size:16px;color:#4a4a4a;white-space:pre;">  occur as a result of this transaction.</div><div class="t" style="left:931.00px;top:470.85px;font-size:16px;color:#4a4a4a;white-space:pre;">• Acknowledge that this document and</div><div class="t" style="left:915.00px;top:491.25px;font-size:16px;color:#4a4a4a;white-space:pre;">  any transaction contemplated herein does</div><div class="t" style="left:914.00px;top:511.65px;font-size:16px;color:#4a4a4a;white-space:pre;">  not constitute, and is not the result of,</div><div class="t" style="left:915.00px;top:532.05px;font-size:16px;color:#4a4a4a;white-space:pre;">  a recommendation by Fidelity to buy, sell,</div><div class="t" style="left:915.00px;top:552.45px;font-size:16px;color:#4a4a4a;white-space:pre;">  or hold an Alternative Investment or any</div><div class="t" style="left:914.00px;top:572.85px;font-size:16px;color:#4a4a4a;white-space:pre;">  investment strategy regarding this type</div><div class="t" style="left:915.00px;top:593.25px;font-size:16px;color:#4a4a4a;white-space:pre;">  of investment.</div><div class="t" style="left:931.00px;top:613.65px;font-size:16px;color:#4a4a4a;white-space:pre;">• Understand that this request and any result-</div><div class="t" style="left:914.00px;top:634.05px;font-size:16px;color:#4a4a4a;white-space:pre;">  ing transactions are subject to the terms</div><div class="t" style="left:915.00px;top:654.45px;font-size:16px;color:#4a4a4a;white-space:pre;">  and conditions of the Addendum.</div><div class="b" style="left:159px;top:715px;width:748px;height:167px;background:#d3eae2;border:3px solid #6a9f8c;box-sizing:border-box"></div><div class="b" style="left:162px;top:718px;width:742px;height:16px;background:#bcd6cb"></div><div class="t" style="left:170.00px;top:721.69px;font-size:11px;color:#555;transform:scaleX(0.9190);">Print Primary Account Owner Name</div><div class="t" style="left:177.00px;top:745.37px;font-size:22px;color:#231f20;transform:scaleX(1.0738);">James P. Duran</div><div class="b" style="left:162px;top:785px;width:742px;height:25px;background:#bcd6cb;border-top:3px solid #6a9f8c;box-sizing:border-box"></div><div class="t" style="left:169.03px;top:794.99px;font-size:13px;color:#555;transform:scaleX(0.9729);">Primary Account Owner Signature</div><div class="t" style="left:723.97px;top:794.99px;font-size:13px;color:#555;transform:scaleX(1.0313);">Date  MM DD YYYY</div><div class="b" style="left:162px;top:810px;width:32px;height:69px;background:#231f20"></div><div class="t" style="left:198.00px;top:832.13px;font-size:40px;color:#231f20;transform:scaleX(1.1538);">X</div><div class="t" style="left:238.22px;top:833.83px;font-size:38px;color:#231f20;font-family:'Liberation Mono';font-style:italic;transform:scaleX(0.8876);">James P. Duran</div><div class="t" style="left:727.00px;top:832.13px;font-size:40px;color:#231f20;transform:scaleX(1.1538);">X</div><div class="t" style="left:763.87px;top:844.76px;font-size:18px;color:#231f20;font-family:'Liberation Mono';transform:scaleX(1.1298);">09/26/2024</div><div class="b" style="left:159px;top:904px;width:748px;height:167px;background:#fff;border:3px solid #555;box-sizing:border-box"></div><div class="b" style="left:162px;top:907px;width:742px;height:15px;background:#e3e3e3"></div><div class="t" style="left:170.00px;top:909.69px;font-size:11px;color:#666;transform:scaleX(0.9407);">Print Joint Account Holder Name</div><div class="b" style="left:162px;top:970px;width:742px;height:25px;background:#e3e3e3;border-top:3px solid #555;box-sizing:border-box"></div><div class="t" style="left:170.00px;top:979.99px;font-size:13px;color:#666;transform:scaleX(1.0057);">Joint Account Holder Signature</div><div class="t" style="left:723.97px;top:979.99px;font-size:13px;color:#666;transform:scaleX(1.0313);">Date  MM DD YYYY</div><div class="b" style="left:162px;top:995px;width:32px;height:73px;background:#231f20"></div><div class="t" style="left:198.00px;top:1021.13px;font-size:40px;color:#231f20;transform:scaleX(1.1538);">X</div><div class="t" style="left:727.00px;top:1021.13px;font-size:40px;color:#231f20;transform:scaleX(1.1538);">X</div><div class="b" style="left:159px;top:1341px;width:1123px;height:141px;background:#e4e4e4;border:2.5px solid #777;border-radius:12px;box-sizing:border-box"></div><div class="t" style="left:175.08px;top:1367.30px;font-size:15px;color:#231f20;font-weight:bold;transform:scaleX(0.9250);">Did you sign the form?</div><div class="t" style="left:330.00px;top:1367.30px;font-size:15px;color:#4a4a4a;">Send the form and any necessary</div><div class="t" style="left:176.00px;top:1385.30px;font-size:15px;color:#4a4a4a;transform:scaleX(0.9748);">documents to Fidelity.</div><div class="t" style="left:176.00px;top:1417.30px;font-size:15px;color:#231f20;font-weight:bold;transform:scaleX(0.8501);">Questions?</div><div class="t" style="left:250.00px;top:1417.30px;font-size:15px;color:#4a4a4a;transform:scaleX(0.9600);">Contact your Fidelity Representative.</div><div class="t" style="left:709.00px;top:1367.30px;font-size:15px;color:#231f20;font-weight:bold;">Regular mail:</div><div class="t" style="left:709.00px;top:1385.80px;font-size:15px;color:#4a4a4a;">Fidelity Investments</div><div class="t" style="left:709.00px;top:1404.30px;font-size:15px;color:#4a4a4a;">PO Box 770001</div><div class="t" style="left:710.00px;top:1422.80px;font-size:15px;color:#4a4a4a;">Cincinnati, OH 45277-0058</div><div class="t" style="left:1004.00px;top:1367.30px;font-size:15px;color:#231f20;font-weight:bold;">Overnight mail:</div><div class="t" style="left:1003.00px;top:1385.80px;font-size:15px;color:#4a4a4a;">Fidelity Investments</div><div class="t" style="left:1003.00px;top:1404.30px;font-size:15px;color:#4a4a4a;">100 Crosby Parkway</div><div class="t" style="left:1003.00px;top:1422.80px;font-size:15px;color:#4a4a4a;">Mail Zone: KC1K</div><div class="t" style="left:1004.00px;top:1441.30px;font-size:15px;color:#4a4a4a;">Covington, KY 41015</div><div class="t" style="left:277.00px;top:1539.30px;font-size:15px;color:#4a4a4a;font-style:italic;transform:scaleX(1.2060);">On this form, “Fidelity” means Fidelity Brokerage Services LLC and its affiliates. Brokerage services are</div><div class="t" style="left:278.11px;top:1557.30px;font-size:15px;color:#4a4a4a;font-style:italic;transform:scaleX(1.1055);">provided by Fidelity Brokerage Services LLC, Member NYSE, SIPC.  534991.8.0 (01/20)</div><div class="b" style="left:158px;top:1655px;width:4px;height:38px;background:#231f20"></div><div class="b" style="left:158px;top:1689px;width:32px;height:4px;background:#231f20"></div><div class="t" style="left:278.80px;top:1674.37px;font-size:22px;color:#555;font-family:'Liberation Mono';transform:scaleX(1.2034);">1.901084.105</div><div class="t" style="left:662.88px;top:1677.76px;font-size:18px;color:#231f20;font-weight:bold;transform:scaleX(1.1167);">Page 2 of 2</div><div class="t" style="left:1018.80px;top:1674.37px;font-size:22px;color:#555;font-family:'Liberation Mono';transform:scaleX(1.2005);">028490302</div><div class="b" style="left:1243px;top:1655px;width:39px;height:40px;background:#231f20"></div></div><div class="b" style="left:35.6px;top:952px;width:277px;height:200px;background:#fff"></div></div><div class="t" style="left:136.12px;top:835.43px;font-size:25px;color:#111;transform:scaleX(0.9406);">Page 7</div><div class="t" style="left:136.12px;top:1293.83px;font-size:25px;color:#111;transform:scaleX(0.9380);">Page 8</div><div class="t" style="left:1941.78px;top:386.68px;font-size:24px;color:#111;font-weight:bold;transform:scaleX(0.9173);">Machine learning</div><div class="t" style="left:2475.82px;top:387.98px;font-size:24px;color:#111;transform:scaleX(0.9844);">Confidence</div><div class="b" style="left:2612px;top:386px;width:12px;height:24px;background:#38852a;border-radius:2px"></div><div class="b" style="left:2628px;top:386px;width:12px;height:24px;background:#38852a;border-radius:2px"></div><div class="b" style="left:2644px;top:386px;width:12px;height:24px;background:#38852a;border-radius:2px"></div><div class="b" style="left:2660px;top:386px;width:12px;height:24px;background:#38852a;border-radius:2px"></div><div class="b" style="left:2676px;top:386px;width:12px;height:24px;background:#38852a;border-radius:2px"></div><div class="b" style="left:2692px;top:386px;width:12px;height:24px;background:#38852a;border-radius:2px"></div><div class="b" style="left:2708px;top:386px;width:12px;height:24px;background:#38852a;border-radius:2px"></div><div class="b" style="left:2724px;top:386px;width:12px;height:24px;background:#38852a;border-radius:2px"></div><div class="b" style="left:2740px;top:386px;width:12px;height:24px;background:#d8d7d3;border-radius:2px"></div><div class="b" style="left:2756px;top:386px;width:12px;height:24px;background:#d8d7d3;border-radius:2px"></div><div class="t" style="left:2784.06px;top:387.98px;font-size:24px;color:#111;transform:scaleX(0.9380);">80%</div><div class="b" style="left:1942px;top:428px;width:918px;height:2px;background:#d6d6d2"></div><svg class="b" style="left:1942px;top:470px;" width="24" height="16" viewBox="0 0 24 16" fill="none"><path d="M2.5 3L12 12.5L21.5 3" stroke="#111" stroke-width="3.2"/></svg><div class="t" style="left:1984.02px;top:467.68px;font-size:24px;color:#111;font-weight:bold;transform:scaleX(0.9775);">Request for transaction-LOI</div><div class="t" style="left:2694.71px;top:467.38px;font-size:24px;color:#1f3b87;transform:scaleX(0.9870);">pages 7-8 of 19</div><div class="b" style="left:2694px;top:490.5px;width:166px;height:2px;background:#1f3b87"></div><div class="t" style="left:1997.00px;top:521.80px;font-size:21.5px;color:#111;font-weight:bold;transform:scaleX(1.0133);">Transaction information</div><div class="b" style="left:1996px;top:550px;width:858px;height:48px;background:#ebf7e9"></div><div class="t" style="left:2002.50px;top:564.53px;font-size:23px;color:#0d5519;transform:scaleX(1.0239);">Account owner name(s)</div><div class="t" style="left:2431.50px;top:564.53px;font-size:23px;color:#0d5519;transform:scaleX(0.9891);">James Duran</div><svg class="b" style="left:2780px;top:560px;" width="28" height="28" viewBox="0 0 28 28" fill="none"><circle cx="14" cy="14" r="11" stroke="#0d5519" stroke-width="2.2"/><path d="M14 3V9M14 19V25M3 14H9M19 14H25" stroke="#0d5519" stroke-width="2.1"/></svg><svg class="b" style="left:2823.5px;top:561.5px;" width="28" height="28" viewBox="0 0 28 28" fill="none"><path d="M9.4 6.4C9.4 12 8.6 14.6 0.4 15.4C8.6 16.2 9.4 18.8 9.4 24.4C9.4 18.8 10.2 16.2 18.4 15.4C10.2 14.6 9.4 12 9.4 6.4Z" stroke="#0d5519" stroke-width="2" stroke-linejoin="round"/><path d="M19.5 0.3C19.5 3.5 19 4.8 14.5 5.3C19 5.8 19.5 7 19.5 10.3C19.5 7 20 5.8 24.5 5.3C20 4.8 19.5 3.5 19.5 0.3Z" stroke="#0d5519" stroke-width="1.9" stroke-linejoin="round"/></svg><div class="b" style="left:1996px;top:600px;width:858px;height:48px;background:#ebf7e9"></div><div class="t" style="left:2002.50px;top:614.53px;font-size:23px;color:#0d5519;transform:scaleX(1.0342);">Account #</div><div class="t" style="left:2431.50px;top:614.53px;font-size:23px;color:#0d5519;transform:scaleX(1.0123);">363-840004</div><svg class="b" style="left:2780px;top:610px;" width="28" height="28" viewBox="0 0 28 28" fill="none"><circle cx="14" cy="14" r="11" stroke="#0d5519" stroke-width="2.2"/><path d="M14 3V9M14 19V25M3 14H9M19 14H25" stroke="#0d5519" stroke-width="2.1"/></svg><svg class="b" style="left:2823.5px;top:611.5px;" width="28" height="28" viewBox="0 0 28 28" fill="none"><path d="M9.4 6.4C9.4 12 8.6 14.6 0.4 15.4C8.6 16.2 9.4 18.8 9.4 24.4C9.4 18.8 10.2 16.2 18.4 15.4C10.2 14.6 9.4 12 9.4 6.4Z" stroke="#0d5519" stroke-width="2" stroke-linejoin="round"/><path d="M19.5 0.3C19.5 3.5 19 4.8 14.5 5.3C19 5.8 19.5 7 19.5 10.3C19.5 7 20 5.8 24.5 5.3C20 4.8 19.5 3.5 19.5 0.3Z" stroke="#0d5519" stroke-width="1.9" stroke-linejoin="round"/></svg><div class="t" style="left:1995.99px;top:674.20px;font-size:21.5px;color:#111;font-weight:bold;transform:scaleX(1.0142);">Purchase information</div><div class="b" style="left:1996px;top:702px;width:858px;height:48px;background:#ebf7e9"></div><div class="t" style="left:2002.50px;top:716.53px;font-size:23px;color:#0d5519;transform:scaleX(1.0153);">Asset name</div><div class="t" style="left:2430.49px;top:716.53px;font-size:23px;color:#0d5519;transform:scaleX(1.0053);">Greenbacker</div><svg class="b" style="left:2780px;top:712px;" width="28" height="28" viewBox="0 0 28 28" fill="none"><circle cx="14" cy="14" r="11" stroke="#0d5519" stroke-width="2.2"/><path d="M14 3V9M14 19V25M3 14H9M19 14H25" stroke="#0d5519" stroke-width="2.1"/></svg><svg class="b" style="left:2823.5px;top:713.5px;" width="28" height="28" viewBox="0 0 28 28" fill="none"><path d="M9.4 6.4C9.4 12 8.6 14.6 0.4 15.4C8.6 16.2 9.4 18.8 9.4 24.4C9.4 18.8 10.2 16.2 18.4 15.4C10.2 14.6 9.4 12 9.4 6.4Z" stroke="#0d5519" stroke-width="2" stroke-linejoin="round"/><path d="M19.5 0.3C19.5 3.5 19 4.8 14.5 5.3C19 5.8 19.5 7 19.5 10.3C19.5 7 20 5.8 24.5 5.3C20 4.8 19.5 3.5 19.5 0.3Z" stroke="#0d5519" stroke-width="1.9" stroke-linejoin="round"/></svg><div class="b" style="left:1996px;top:752px;width:858px;height:48px;background:#ebf7e9"></div><div class="t" style="left:2001.46px;top:766.53px;font-size:23px;color:#0d5519;transform:scaleX(1.0433);">Number of shares/units (if known)</div><div class="t" style="left:2430.45px;top:766.53px;font-size:23px;color:#0d5519;transform:scaleX(1.0524);">250</div><svg class="b" style="left:2780px;top:762px;" width="28" height="28" viewBox="0 0 28 28" fill="none"><circle cx="14" cy="14" r="11" stroke="#0d5519" stroke-width="2.2"/><path d="M14 3V9M14 19V25M3 14H9M19 14H25" stroke="#0d5519" stroke-width="2.1"/></svg><svg class="b" style="left:2823.5px;top:763.5px;" width="28" height="28" viewBox="0 0 28 28" fill="none"><path d="M9.4 6.4C9.4 12 8.6 14.6 0.4 15.4C8.6 16.2 9.4 18.8 9.4 24.4C9.4 18.8 10.2 16.2 18.4 15.4C10.2 14.6 9.4 12 9.4 6.4Z" stroke="#0d5519" stroke-width="2" stroke-linejoin="round"/><path d="M19.5 0.3C19.5 3.5 19 4.8 14.5 5.3C19 5.8 19.5 7 19.5 10.3C19.5 7 20 5.8 24.5 5.3C20 4.8 19.5 3.5 19.5 0.3Z" stroke="#0d5519" stroke-width="1.9" stroke-linejoin="round"/></svg><div class="b" style="left:1996px;top:802px;width:858px;height:48px;background:#ebf7e9"></div><div class="t" style="left:2001.54px;top:816.53px;font-size:23px;color:#0d5519;transform:scaleX(0.9607);">Share class</div><div class="t" style="left:2430.52px;top:816.53px;font-size:23px;color:#0d5519;transform:scaleX(0.9791);">Class VI</div><svg class="b" style="left:2780px;top:812px;" width="28" height="28" viewBox="0 0 28 28" fill="none"><circle cx="14" cy="14" r="11" stroke="#0d5519" stroke-width="2.2"/><path d="M14 3V9M14 19V25M3 14H9M19 14H25" stroke="#0d5519" stroke-width="2.1"/></svg><svg class="b" style="left:2823.5px;top:813.5px;" width="28" height="28" viewBox="0 0 28 28" fill="none"><path d="M9.4 6.4C9.4 12 8.6 14.6 0.4 15.4C8.6 16.2 9.4 18.8 9.4 24.4C9.4 18.8 10.2 16.2 18.4 15.4C10.2 14.6 9.4 12 9.4 6.4Z" stroke="#0d5519" stroke-width="2" stroke-linejoin="round"/><path d="M19.5 0.3C19.5 3.5 19 4.8 14.5 5.3C19 5.8 19.5 7 19.5 10.3C19.5 7 20 5.8 24.5 5.3C20 4.8 19.5 3.5 19.5 0.3Z" stroke="#0d5519" stroke-width="1.9" stroke-linejoin="round"/></svg><div class="b" style="left:1996px;top:852px;width:858px;height:48px;background:#ebf7e9"></div><div class="t" style="left:2001.59px;top:866.53px;font-size:23px;color:#0d5519;transform:scaleX(0.9137);">CUSIP</div><div class="t" style="left:2430.48px;top:866.53px;font-size:23px;color:#0d5519;transform:scaleX(1.0191);">928365342</div><svg class="b" style="left:2780px;top:862px;" width="28" height="28" viewBox="0 0 28 28" fill="none"><circle cx="14" cy="14" r="11" stroke="#0d5519" stroke-width="2.2"/><path d="M14 3V9M14 19V25M3 14H9M19 14H25" stroke="#0d5519" stroke-width="2.1"/></svg><svg class="b" style="left:2823.5px;top:863.5px;" width="28" height="28" viewBox="0 0 28 28" fill="none"><path d="M9.4 6.4C9.4 12 8.6 14.6 0.4 15.4C8.6 16.2 9.4 18.8 9.4 24.4C9.4 18.8 10.2 16.2 18.4 15.4C10.2 14.6 9.4 12 9.4 6.4Z" stroke="#0d5519" stroke-width="2" stroke-linejoin="round"/><path d="M19.5 0.3C19.5 3.5 19 4.8 14.5 5.3C19 5.8 19.5 7 19.5 10.3C19.5 7 20 5.8 24.5 5.3C20 4.8 19.5 3.5 19.5 0.3Z" stroke="#0d5519" stroke-width="1.9" stroke-linejoin="round"/></svg><div class="b" style="left:1996px;top:902px;width:858px;height:48px;background:#ebf7e9"></div><div class="t" style="left:2001.47px;top:916.53px;font-size:23px;color:#0d5519;transform:scaleX(1.0298);">Price (if known)</div><div class="t" style="left:2431.50px;top:916.53px;font-size:23px;color:#0d5519;transform:scaleX(1.0074);">$1000.00000</div><svg class="b" style="left:2780px;top:912px;" width="28" height="28" viewBox="0 0 28 28" fill="none"><circle cx="14" cy="14" r="11" stroke="#0d5519" stroke-width="2.2"/><path d="M14 3V9M14 19V25M3 14H9M19 14H25" stroke="#0d5519" stroke-width="2.1"/></svg><svg class="b" style="left:2823.5px;top:913.5px;" width="28" height="28" viewBox="0 0 28 28" fill="none"><path d="M9.4 6.4C9.4 12 8.6 14.6 0.4 15.4C8.6 16.2 9.4 18.8 9.4 24.4C9.4 18.8 10.2 16.2 18.4 15.4C10.2 14.6 9.4 12 9.4 6.4Z" stroke="#0d5519" stroke-width="2" stroke-linejoin="round"/><path d="M19.5 0.3C19.5 3.5 19 4.8 14.5 5.3C19 5.8 19.5 7 19.5 10.3C19.5 7 20 5.8 24.5 5.3C20 4.8 19.5 3.5 19.5 0.3Z" stroke="#0d5519" stroke-width="1.9" stroke-linejoin="round"/></svg><div class="b" style="left:1996px;top:952px;width:858px;height:48px;background:#ebf7e9"></div><div class="t" style="left:2002.50px;top:966.53px;font-size:23px;color:#0d5519;transform:scaleX(1.0579);">Amount</div><div class="t" style="left:2431.50px;top:966.53px;font-size:23px;color:#0d5519;transform:scaleX(0.9952);">$250,000.00</div><svg class="b" style="left:2780px;top:962px;" width="28" height="28" viewBox="0 0 28 28" fill="none"><circle cx="14" cy="14" r="11" stroke="#0d5519" stroke-width="2.2"/><path d="M14 3V9M14 19V25M3 14H9M19 14H25" stroke="#0d5519" stroke-width="2.1"/></svg><svg class="b" style="left:2823.5px;top:963.5px;" width="28" height="28" viewBox="0 0 28 28" fill="none"><path d="M9.4 6.4C9.4 12 8.6 14.6 0.4 15.4C8.6 16.2 9.4 18.8 9.4 24.4C9.4 18.8 10.2 16.2 18.4 15.4C10.2 14.6 9.4 12 9.4 6.4Z" stroke="#0d5519" stroke-width="2" stroke-linejoin="round"/><path d="M19.5 0.3C19.5 3.5 19 4.8 14.5 5.3C19 5.8 19.5 7 19.5 10.3C19.5 7 20 5.8 24.5 5.3C20 4.8 19.5 3.5 19.5 0.3Z" stroke="#0d5519" stroke-width="1.9" stroke-linejoin="round"/></svg><div class="t" style="left:1996.60px;top:1025.80px;font-size:21.5px;color:#111;font-weight:bold;transform:scaleX(1.0173);">Signature &amp; dates</div><div class="b" style="left:1996px;top:1058px;width:858px;height:48px;background:#ebf7e9"></div><div class="t" style="left:2001.46px;top:1072.53px;font-size:23px;color:#0d5519;transform:scaleX(1.0426);">Primary account holder signature</div><div class="t" style="left:2431.50px;top:1072.53px;font-size:23px;color:#0d5519;transform:scaleX(0.9724);">Yes</div><svg class="b" style="left:2780px;top:1068px;" width="28" height="28" viewBox="0 0 28 28" fill="none"><circle cx="14" cy="14" r="11" stroke="#0d5519" stroke-width="2.2"/><path d="M14 3V9M14 19V25M3 14H9M19 14H25" stroke="#0d5519" stroke-width="2.1"/></svg><svg class="b" style="left:2823.5px;top:1069.5px;" width="28" height="28" viewBox="0 0 28 28" fill="none"><path d="M9.4 6.4C9.4 12 8.6 14.6 0.4 15.4C8.6 16.2 9.4 18.8 9.4 24.4C9.4 18.8 10.2 16.2 18.4 15.4C10.2 14.6 9.4 12 9.4 6.4Z" stroke="#0d5519" stroke-width="2" stroke-linejoin="round"/><path d="M19.5 0.3C19.5 3.5 19 4.8 14.5 5.3C19 5.8 19.5 7 19.5 10.3C19.5 7 20 5.8 24.5 5.3C20 4.8 19.5 3.5 19.5 0.3Z" stroke="#0d5519" stroke-width="1.9" stroke-linejoin="round"/></svg><div class="b" style="left:1996px;top:1112px;width:858px;height:48px;background:#ebf7e9"></div><div class="t" style="left:2001.47px;top:1126.53px;font-size:23px;color:#0d5519;transform:scaleX(1.0258);">Date</div><div class="t" style="left:2431.50px;top:1126.53px;font-size:23px;color:#0d5519;transform:scaleX(0.9724);">Yes</div><svg class="b" style="left:2780px;top:1122px;" width="28" height="28" viewBox="0 0 28 28" fill="none"><circle cx="14" cy="14" r="11" stroke="#0d5519" stroke-width="2.2"/><path d="M14 3V9M14 19V25M3 14H9M19 14H25" stroke="#0d5519" stroke-width="2.1"/></svg><svg class="b" style="left:2823.5px;top:1123.5px;" width="28" height="28" viewBox="0 0 28 28" fill="none"><path d="M9.4 6.4C9.4 12 8.6 14.6 0.4 15.4C8.6 16.2 9.4 18.8 9.4 24.4C9.4 18.8 10.2 16.2 18.4 15.4C10.2 14.6 9.4 12 9.4 6.4Z" stroke="#0d5519" stroke-width="2" stroke-linejoin="round"/><path d="M19.5 0.3C19.5 3.5 19 4.8 14.5 5.3C19 5.8 19.5 7 19.5 10.3C19.5 7 20 5.8 24.5 5.3C20 4.8 19.5 3.5 19.5 0.3Z" stroke="#0d5519" stroke-width="1.9" stroke-linejoin="round"/></svg><div class="t" style="left:2002.50px;top:1180.53px;font-size:23px;color:#1f3b87;transform:scaleX(1.0520);">Joint account holder signature</div><div class="t" style="left:2430.43px;top:1180.53px;font-size:23px;color:#1f3b87;transform:scaleX(1.0739);">Not required</div><svg class="b" style="left:2780px;top:1176px;" width="28" height="28" viewBox="0 0 28 28" fill="none"><circle cx="14" cy="14" r="11" stroke="#1f3b87" stroke-width="2.2"/><path d="M14 3V9M14 19V25M3 14H9M19 14H25" stroke="#1f3b87" stroke-width="2.1"/></svg><svg class="b" style="left:2823.5px;top:1177.5px;" width="28" height="28" viewBox="0 0 28 28" fill="none"><path d="M9.4 6.4C9.4 12 8.6 14.6 0.4 15.4C8.6 16.2 9.4 18.8 9.4 24.4C9.4 18.8 10.2 16.2 18.4 15.4C10.2 14.6 9.4 12 9.4 6.4Z" stroke="#1f3b87" stroke-width="2" stroke-linejoin="round"/><path d="M19.5 0.3C19.5 3.5 19 4.8 14.5 5.3C19 5.8 19.5 7 19.5 10.3C19.5 7 20 5.8 24.5 5.3C20 4.8 19.5 3.5 19.5 0.3Z" stroke="#1f3b87" stroke-width="1.9" stroke-linejoin="round"/></svg><div class="t" style="left:2001.47px;top:1234.53px;font-size:23px;color:#1f3b87;transform:scaleX(1.0258);">Date</div><div class="t" style="left:2430.43px;top:1234.53px;font-size:23px;color:#1f3b87;transform:scaleX(1.0739);">Not required</div><svg class="b" style="left:2780px;top:1230px;" width="28" height="28" viewBox="0 0 28 28" fill="none"><circle cx="14" cy="14" r="11" stroke="#1f3b87" stroke-width="2.2"/><path d="M14 3V9M14 19V25M3 14H9M19 14H25" stroke="#1f3b87" stroke-width="2.1"/></svg><svg class="b" style="left:2823.5px;top:1231.5px;" width="28" height="28" viewBox="0 0 28 28" fill="none"><path d="M9.4 6.4C9.4 12 8.6 14.6 0.4 15.4C8.6 16.2 9.4 18.8 9.4 24.4C9.4 18.8 10.2 16.2 18.4 15.4C10.2 14.6 9.4 12 9.4 6.4Z" stroke="#1f3b87" stroke-width="2" stroke-linejoin="round"/><path d="M19.5 0.3C19.5 3.5 19 4.8 14.5 5.3C19 5.8 19.5 7 19.5 10.3C19.5 7 20 5.8 24.5 5.3C20 4.8 19.5 3.5 19.5 0.3Z" stroke="#1f3b87" stroke-width="1.9" stroke-linejoin="round"/></svg><svg class="b" style="left:1946px;top:1292px;" width="16" height="24" viewBox="0 0 16 24" fill="none"><path d="M3 2.5L12.5 12L3 21.5" stroke="#111" stroke-width="3.2"/></svg><div class="t" style="left:1984.00px;top:1293.46px;font-size:24.5px;color:#111;font-weight:bold;transform:scaleX(0.9773);">Addendum &amp; Custody agreement</div><div class="t" style="left:2693.00px;top:1293.68px;font-size:24px;color:#1f3b87;">pages 1-4 of 19</div><div class="b" style="left:2693px;top:1317px;width:167px;height:2px;background:#1f3b87"></div><svg class="b" style="left:1946px;top:1364px;" width="16" height="24" viewBox="0 0 16 24" fill="none"><path d="M3 2.5L12.5 12L3 21.5" stroke="#111" stroke-width="3.2"/></svg><div class="t" style="left:1984.00px;top:1365.26px;font-size:24.5px;color:#111;font-weight:bold;transform:scaleX(0.9615);">Subscription agreement</div><div class="t" style="left:2667.01px;top:1365.68px;font-size:24px;color:#1f3b87;transform:scaleX(0.9941);">pages 10-19 of 19</div><div class="b" style="left:2667px;top:1389px;width:193px;height:2px;background:#1f3b87"></div><div class="b" style="left:1748px;top:1527px;width:30px;height:30px;border:3px solid #a9a9a9;border-radius:5px;box-sizing:border-box;background:#fff"></div><div class="t" style="left:1796.60px;top:1531.68px;font-size:24px;color:#111;transform:scaleX(1.0065);">Automatically load the next Order when complete</div><div class="b" style="left:2372px;top:1508px;width:198px;height:68px;border:2px solid #444;border-radius:34px;box-sizing:border-box"></div><div class="t" style="left:2402.02px;top:1531.68px;font-size:24px;color:#111;font-weight:bold;transform:scaleX(0.9769);">Reject order</div><div class="b" style="left:2588px;top:1508px;width:227px;height:68px;background:#378a2b;border-radius:34px"></div><div class="t" style="left:2618.70px;top:1531.68px;font-size:24px;color:#fff;font-weight:bold;transform:scaleX(0.9956);">Approve order</div></body></html>
